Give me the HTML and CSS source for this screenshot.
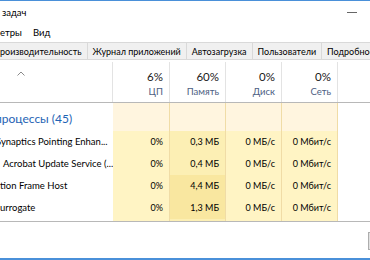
FILE: index.html
```html
<!DOCTYPE html>
<html lang="ru">
<head>
  <meta charset="UTF-8" />
  <title>Диспетчер задач</title>
  <meta name="viewport" content="width=device-width, initial-scale=1.0" />
  <link rel="stylesheet" href="styles.css">
</head>
<body>
  <div class="window">
    <div class="titlebar">
      <span class="title">задач</span>
      <span class="min"></span>
    </div>
    <div class="menu">
      <span>етры</span>
      <span>Вид</span>
    </div>
    <div class="tabs">
      <div class="tab tab-first">роизводительность</div>
      <div class="tab">Журнал приложений</div>
      <div class="tab">Автозагрузка</div>
      <div class="tab">Пользователи</div>
      <div class="tab">Подробности</div>
    </div>

    <div class="list-head cols">
      <div class="hcell hname">
        <svg class="caret" width="8" height="5" viewBox="0 0 8 5"><path d="M0.5 4.5 L4 1 L7.5 4.5" fill="none" stroke="#8a8a8a" stroke-width="1"/></svg>
      </div>
      <div class="hcell"><span class="pct">6%</span><span class="lbl">ЦП</span></div>
      <div class="hcell"><span class="pct">60%</span><span class="lbl">Память</span></div>
      <div class="hcell"><span class="pct">0%</span><span class="lbl">Диск</span></div>
      <div class="hcell"><span class="pct">0%</span><span class="lbl">Сеть</span></div>
      <div class="hcell hlast"></div>
    </div>

    <div class="list">
      <div class="row group cols">
        <div class="c name group-name">процессы (45)</div>
        <div class="c"></div>
        <div class="c"></div>
        <div class="c"></div>
        <div class="c"></div>
        <div class="c last"></div>
      </div>
      <div class="row proc cols">
        <div class="c name cut-s">Synaptics Pointing Enhan...</div>
        <div class="c cpu">0%</div>
        <div class="c mem">0,3 МБ</div>
        <div class="c io">0 МБ/с</div>
        <div class="c io">0 Мбит/с</div>
        <div class="c last"></div>
      </div>
      <div class="row proc cols">
        <div class="c name pad-a">Acrobat Update Service (...</div>
        <div class="c cpu">0%</div>
        <div class="c mem">0,4 МБ</div>
        <div class="c io">0 МБ/с</div>
        <div class="c io">0 Мбит/с</div>
        <div class="c last"></div>
      </div>
      <div class="row proc cols">
        <div class="c name">tion Frame Host</div>
        <div class="c cpu">0%</div>
        <div class="c mem mem-hi">4,4 МБ</div>
        <div class="c io">0 МБ/с</div>
        <div class="c io">0 Мбит/с</div>
        <div class="c last"></div>
      </div>
      <div class="row proc cols">
        <div class="c name">urrogate</div>
        <div class="c cpu">0%</div>
        <div class="c mem mem-hi">1,3 МБ</div>
        <div class="c io">0 МБ/с</div>
        <div class="c io">0 Мбит/с</div>
        <div class="c last"></div>
      </div>
      <div class="row proc cols">
        <div class="c name"></div>
        <div class="c cpu"></div>
        <div class="c mem"></div>
        <div class="c io"></div>
        <div class="c io"></div>
        <div class="c last"></div>
      </div>
    </div>

    <div class="footer">
      <span class="btn"></span>
    </div>
  </div>
</body>
</html>
```

FILE: styles.css
```css
body {
  margin: 0;
  background: #fff;
  color: #000;
  font-family: Lato, "Noto Sans", sans-serif;
  overflow: hidden;
}
.window {
  width: 370px;
  height: 260px;
  box-sizing: border-box;
  border-top: 1px solid #4a90d9;
  border-bottom: 2px solid #4a90d9;
  display: flex;
  flex-direction: column;
  overflow: hidden;
}
.titlebar {
  height: 23px;
  flex-shrink: 0;
  display: flex;
  align-items: center;
  justify-content: space-between;
  padding: 0 13px 0 2px;
  font-size: 9.5px;
}
.min {
  width: 10px;
  height: 1px;
  background: #666;
}
.menu {
  height: 17px;
  flex-shrink: 0;
  display: flex;
  gap: 11px;
  font-size: 9.5px;
  line-height: 17px;
}
.tabs {
  height: 18px;
  flex-shrink: 0;
  margin-top: 1px;
  display: flex;
  white-space: nowrap;
  font-size: 9px;
}
.tab {
  flex-shrink: 0;
  box-sizing: border-box;
  height: 18px;
  line-height: 18px;
  padding: 0 5px;
  background: #f0f0f0;
  border: 1px solid #d9d9d9;
  border-left: none;
}
.tab-first {
  padding: 0 5px 0 0;
}

.cols {
  display: grid;
  grid-template-columns: 113px 57px 56px 56px 56px 1fr;
}
.list-head {
  flex-shrink: 0;
  margin-top: 2px;
  height: 40px;
  border-bottom: 1px solid #b8b8b8;
}
.hcell {
  display: flex;
  flex-direction: column;
  align-items: flex-end;
  padding: 7px 6px 0 0;
  border-right: 1px solid #e3e3e3;
  min-width: 0;
}
.hname {
  align-items: flex-start;
  padding: 9px 0 0 17px;
}
.hlast {
  border-right: none;
}
.caret {
  display: block;
}
.pct {
  font-size: 11.5px;
  line-height: 16px;
  color: #1a1a1a;
}
.lbl {
  font-size: 9.5px;
  line-height: 14px;
  color: #4d6082;
}

.list {
  flex-shrink: 0;
  height: 118px;
  overflow: hidden;
  border-bottom: 1px solid #b8b8b8;
}
.row {
  height: 22px;
}
.c {
  min-width: 0;
  box-sizing: border-box;
  border-right: 1px solid #f0dca6;
  text-align: right;
  padding-right: 6px;
  font-size: 9px;
  line-height: 22px;
  white-space: nowrap;
}
.name {
  font-size: 9.5px;
  text-align: left;
  padding-right: 0;
  overflow: hidden;
  background: #fff;
  border-right: none;
}
.last {
  background: #fff;
  border-right: none;
}
.group {
  height: 28px;
}
.group .c {
  background: #fff5df;
}
.group .name,
.group .last {
  background: #fff;
}
.group-name {
  color: #1e63b4;
  font-size: 12px;
  line-height: 24px;
  padding-top: 4px;
  text-indent: -5px;
}
.cut-s {
  text-indent: -4px;
}
.pad-a {
  text-indent: 3px;
}
.cpu,
.io {
  background: #fff4c4;
}
.mem {
  background: #fcefb4;
}
.mem-hi {
  background: #f9e7a0;
}

.footer {
  flex: 1;
  display: flex;
  justify-content: flex-end;
  align-items: flex-start;
}
.btn {
  display: block;
  flex-shrink: 0;
  width: 80px;
  height: 18px;
  box-sizing: border-box;
  margin-top: 10px;
  margin-right: -78px;
  border: 1px solid #adadad;
  background: #e1e1e1;
}
```
